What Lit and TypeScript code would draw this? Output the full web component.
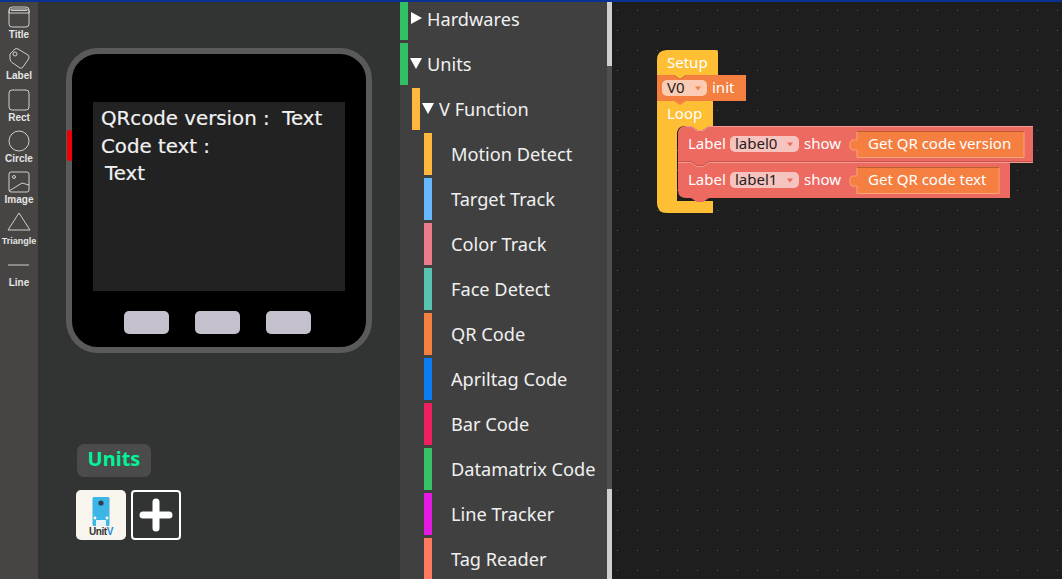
import { LitElement, html, css, svg } from "lit";
import { customElement } from "lit/decorators.js";

const TOOLS: { name: string; icon: unknown; cls?: string }[] = [
  { name: "Title", icon: svg`<rect x="1" y="1" width="20" height="20" rx="3"/><path d="M1 5 Q1 3 4 3H18Q21 3 21 5V7H1Z M3 4.5H19"/>` },
  { name: "Label", icon: svg`<path d="M2 7 L7 2 Q8 1 10 2 L20 8 Q22 10 20.5 12 L15 20 Q13.5 22 12 21 L4 15.5 Q2 14 2 12Z"/><circle cx="7" cy="7" r="2"/>` },
  { name: "Rect", icon: svg`<rect x="1" y="1" width="20" height="20" rx="3"/>` },
  { name: "Circle", icon: svg`<circle cx="11" cy="11" r="10"/>` },
  { name: "Image", icon: svg`<rect x="1" y="1" width="20" height="20" rx="2"/><circle cx="6" cy="6" r="1.5"/><path d="M1 20 L14 12 L21 14"/>`, cls: "img" },
  { name: "Triangle", icon: svg`<path d="M11 1 L22 18 H0Z"/>`, cls: "tri" },
  { name: "Line", icon: svg`<path d="M0 11 H21"/>`, cls: "line" },
];

const CATS = [
  { name: "Hardwares", color: "#33bf66", level: 0, arrow: "right" },
  { name: "Units", color: "#33bf66", level: 0, arrow: "down" },
  { name: "V Function", color: "#ffb83d", level: 1, arrow: "down" },
  { name: "Motion Detect", color: "#ffb83d", level: 2 },
  { name: "Target Track", color: "#66b8ff", level: 2 },
  { name: "Color Track", color: "#ee7b8c", level: 2 },
  { name: "Face Detect", color: "#57c4b2", level: 2 },
  { name: "QR Code", color: "#f47f41", level: 2 },
  { name: "Apriltag Code", color: "#0b7cf2", level: 2 },
  { name: "Bar Code", color: "#f01f5f", level: 2 },
  { name: "Datamatrix Code", color: "#37c267", level: 2 },
  { name: "Line Tracker", color: "#e619e2", level: 2 },
  { name: "Tag Reader", color: "#ff7a5e", level: 2 },
];

@customElement("app-root")
export class AppRoot extends LitElement {
  static styles = css`
    :host { display: block; position: relative; width: 1062px; height: 579px; overflow: hidden; background: #323433; }
    .strip { position: absolute; left: 0; top: 0; right: 0; height: 2px; background: #0a3391; z-index: 5; }
    .app { display: flex; height: 579px; }

    .tools { width: 38px; flex: none; background: #474543; display: flex; flex-direction: column; align-items: center; padding-top: 6px; box-sizing: border-box; }
    .tool { height: 41.3px; display: flex; flex-direction: column; align-items: center; color: #e4e4e4; font: bold 10px "Liberation Sans", Arial, sans-serif; }
    .tool svg { width: 22px; height: 22px; fill: none; stroke: #dcdcdc; stroke-width: 0.9; overflow: visible; display: block; }
    .tool span { margin-top: 1px; line-height: 12px; }
    .tool.tri { font-size: 9px; }

    .stage { width: 362px; flex: none; background: #323433; display: flex; flex-direction: column; padding: 48px 0 0 28px; box-sizing: border-box; }
    .phone { position: relative; width: 306px; height: 305px; box-sizing: border-box; border: 6px solid #5a5a5a; border-radius: 32px; background: #000; display: flex; flex-direction: column; align-items: center; padding-top: 48px; }
    .red { position: absolute; left: -5px; top: 76px; width: 5px; height: 31px; background: #f00000; border-radius: 2px; }
    .screen { width: 252px; height: 189px; background: #222; color: #f2f2f2; font: 19.8px/27.5px "DejaVu Sans", sans-serif; -webkit-text-stroke: 0.2px #f2f2f2; padding: 3px 0 0 8px; box-sizing: border-box; white-space: pre; }
    .indent { padding-left: 4px; }
    .keys { display: flex; gap: 26px; margin: 20px 3px 0 0; }
    .key { width: 45px; height: 23px; border-radius: 5px; background: #c4c1cc; }
    .tag { margin: 91px 0 0 11px; width: 74px; height: 33px; border-radius: 7px; background: #4b4b4b; color: #00f59a; font: bold 20px/29px "Noto Sans", sans-serif; text-align: center; }
    .units { display: flex; gap: 5px; margin: 13px 0 0 10px; }
    .unit { width: 50px; height: 50px; border-radius: 5px; box-sizing: border-box; }
    .unitv { background: #f8f5ef; display: flex; flex-direction: column; align-items: center; padding-top: 7px; }
    .unitv svg { width: 18px; height: 29px; display: block; }
    .unitv span { font: bold 10px/10px "Liberation Sans", sans-serif; color: #333; letter-spacing: -0.4px; margin-top: 1px; }
    .unitv b { color: #1a8be0; font-weight: bold; }
    .add { border: 2px solid #fff; border-radius: 4px; display: flex; align-items: center; justify-content: center; }
    .add svg { width: 36px; height: 36px; display: block; filter: blur(0.5px); }

    .cats { position: relative; width: 212px; flex: none; background: #404040; overflow: hidden; color: #f0f0f0; font: 18.2px "Noto Sans", sans-serif; display: flex; flex-direction: column; gap: 3px; margin-top: -2px; height: 583px; }
    .row { display: flex; flex: none; height: 42px; align-items: center; }
    .bar { width: 8px; height: 100%; flex: none; }
    .lv1 { padding-left: 12px; }
    .lv2 { padding-left: 24px; }
    .arrow { width: 12px; height: 12px; flex: none; fill: #fff; display: block; margin: 0 5px 2px 2px; }
    .noarrow { margin-left: 19px; }
    .track { position: absolute; right: 0; top: 2px; bottom: 0; width: 5px; background: #4f4f4f; }
    .thumb { position: absolute; left: 0; width: 5px; background: #cfcfcf; }
    .t1 { top: 0; height: 66px; }
    .t2 { top: 489px; bottom: 0; }

    .work { flex: 1; position: relative; background: #1e1e1e; }
    .work svg { position: absolute; left: 0; top: 0; width: 450px; height: 579px; display: block; }
    .work text { font: 15px "Noto Sans", sans-serif; fill: #fff; }
    .work text.dark { fill: #222; }
  `;

  private pill(x: number, y: number, w: number, t: string, c: string) {
    return svg`<rect x=${x} y=${y} width=${w} height="16" rx="5" fill="#ffffff" fill-opacity="0.6"/>
      <text class="dark" x=${x + 5} y=${y + 13}>${t}</text>
      <path d="M${x + w - 12} ${y + 6.5} h6 l-3 4z" fill=${c}/>`;
  }

  render() {
    return html`
      <div class="strip"></div>
      <div class="app">
        <div class="tools">
          ${TOOLS.map((t) => html`<div class="tool ${t.cls ?? ""}"><svg viewBox="0 0 22 22">${t.icon}</svg><span>${t.name}</span></div>`)}
        </div>
        <div class="stage">
          <div class="phone">
            <div class="red"></div>
            <div class="screen"><div>QRcode version :  Text</div><div>Code text :</div><div class="indent">Text</div></div>
            <div class="keys"><div class="key"></div><div class="key"></div><div class="key"></div></div>
          </div>
          <div class="tag">Units</div>
          <div class="units">
            <div class="unit unitv">
              <svg viewBox="0 0 18 29">
                <rect x="0.5" y="0" width="17" height="29" rx="1.5" fill="#3db5e6"/>
                <circle cx="9" cy="6" r="2.6" fill="#2c3e50"/>
                <circle cx="3" cy="21" r="1.4" fill="#fff"/><circle cx="15" cy="21" r="1.4" fill="#fff"/>
                <rect x="4" y="23" width="10" height="6" fill="#e8f4f8"/>
              </svg>
              <span>Unit<b>V</b></span>
            </div>
            <div class="unit add">
              <svg viewBox="0 0 36 36"><path d="M18 5V31M5 18H31" stroke="#fff" stroke-width="7" stroke-linecap="round"/></svg>
            </div>
          </div>
        </div>
        <div class="cats">
          ${CATS.map((c) => html`
            <div class="row lv${c.level}">
              <div class="bar" style="background:${c.color}"></div>
              ${c.arrow === "right"
                ? html`<svg class="arrow" viewBox="0 0 12 12"><path d="M1 0 L12 6 L1 12Z"/></svg>`
                : c.arrow === "down"
                ? html`<svg class="arrow" viewBox="0 0 12 12"><path d="M0 1 H12 L6 12Z"/></svg>`
                : html`<span class="noarrow"></span>`}
              <span>${c.name}</span>
            </div>`)}
          <div class="track"><div class="thumb t1"></div><div class="thumb t2"></div></div>
        </div>
        <div class="work">
          <svg viewBox="0 0 450 579">
            <defs>
              <pattern id="dots" width="20" height="20" patternUnits="userSpaceOnUse" x="5" y="10">
                <rect width="1" height="1" fill="#5c5c5c"/>
              </pattern>
            </defs>
            <rect width="450" height="579" fill="url(#dots)"/>
            <g transform="translate(-612 0)">
              <path d="M657 60 Q657 50 667 50 H716 Q718 50 718 52 V75 H686 L680 79 L674 75 H657Z" fill="#febf35"/>
              <text x="667" y="68">Setup</text>
              <path d="M657 100 H713 V126 H709 L703 130 H697 L691 126 H685 Q677 126 677 134 V201 H713 V213 H667 Q657 213 657 203Z" fill="#febf35"/>
              <text x="667" y="119">Loop</text>
              <path d="M657 75 H674 L680 79 L686 75 H746 V101 H686 L680 105 L674 101 H657Z" fill="#f47f41"/>
              ${this.pill(662, 80, 45, "V0", "#f47f41")}
              <text x="712" y="93">init</text>
              <path d="M678 134 Q678 126 686 126 H691 L697 130 H703 L709 126 H1033 V162 H1010 V198 H709 L703 202 H697 L691 198 H686 Q678 198 678 190Z" fill="#ec6a5f"/>
              <path d="M686 126.5 H691 L697 130.5 H703 L709 126.5 H1033" stroke="#f29a92" fill="none"/>
              <path d="M678 162.5 H691 L697 166.5 H703 L709 162.5 H1033" stroke="#f29a92" fill="none"/>
              <path d="M678 161.5 H691 L697 165.5 H703 L709 161.5 H1033" stroke="#c9544a" fill="none"/>
              <text x="688" y="149">Label</text>
              ${this.pill(730, 136, 69, "label0", "#ec6a5f")}
              <text x="804" y="149">show</text>
              <text x="688" y="185">Label</text>
              ${this.pill(730, 172, 69, "label1", "#ec6a5f")}
              <text x="804" y="185">show</text>
              <path d="M857 131.5 H1024 V157.5 H857 V150 H852 L850 148 V142 L852 140 H857Z" fill="#f47f41" stroke="#f9a577"/>
              <path d="M857 131.5 H1024" stroke="#b85f2c" fill="none"/>
              <text x="868" y="149">Get QR code version</text>
              <path d="M857 167.5 H999 V193.5 H857 V186 H852 L850 184 V178 L852 176 H857Z" fill="#f47f41" stroke="#f9a577"/>
              <path d="M857 167.5 H999" stroke="#b85f2c" fill="none"/>
              <text x="868" y="185">Get QR code text</text>
            </g>
          </svg>
        </div>
      </div>
    `;
  }
}
